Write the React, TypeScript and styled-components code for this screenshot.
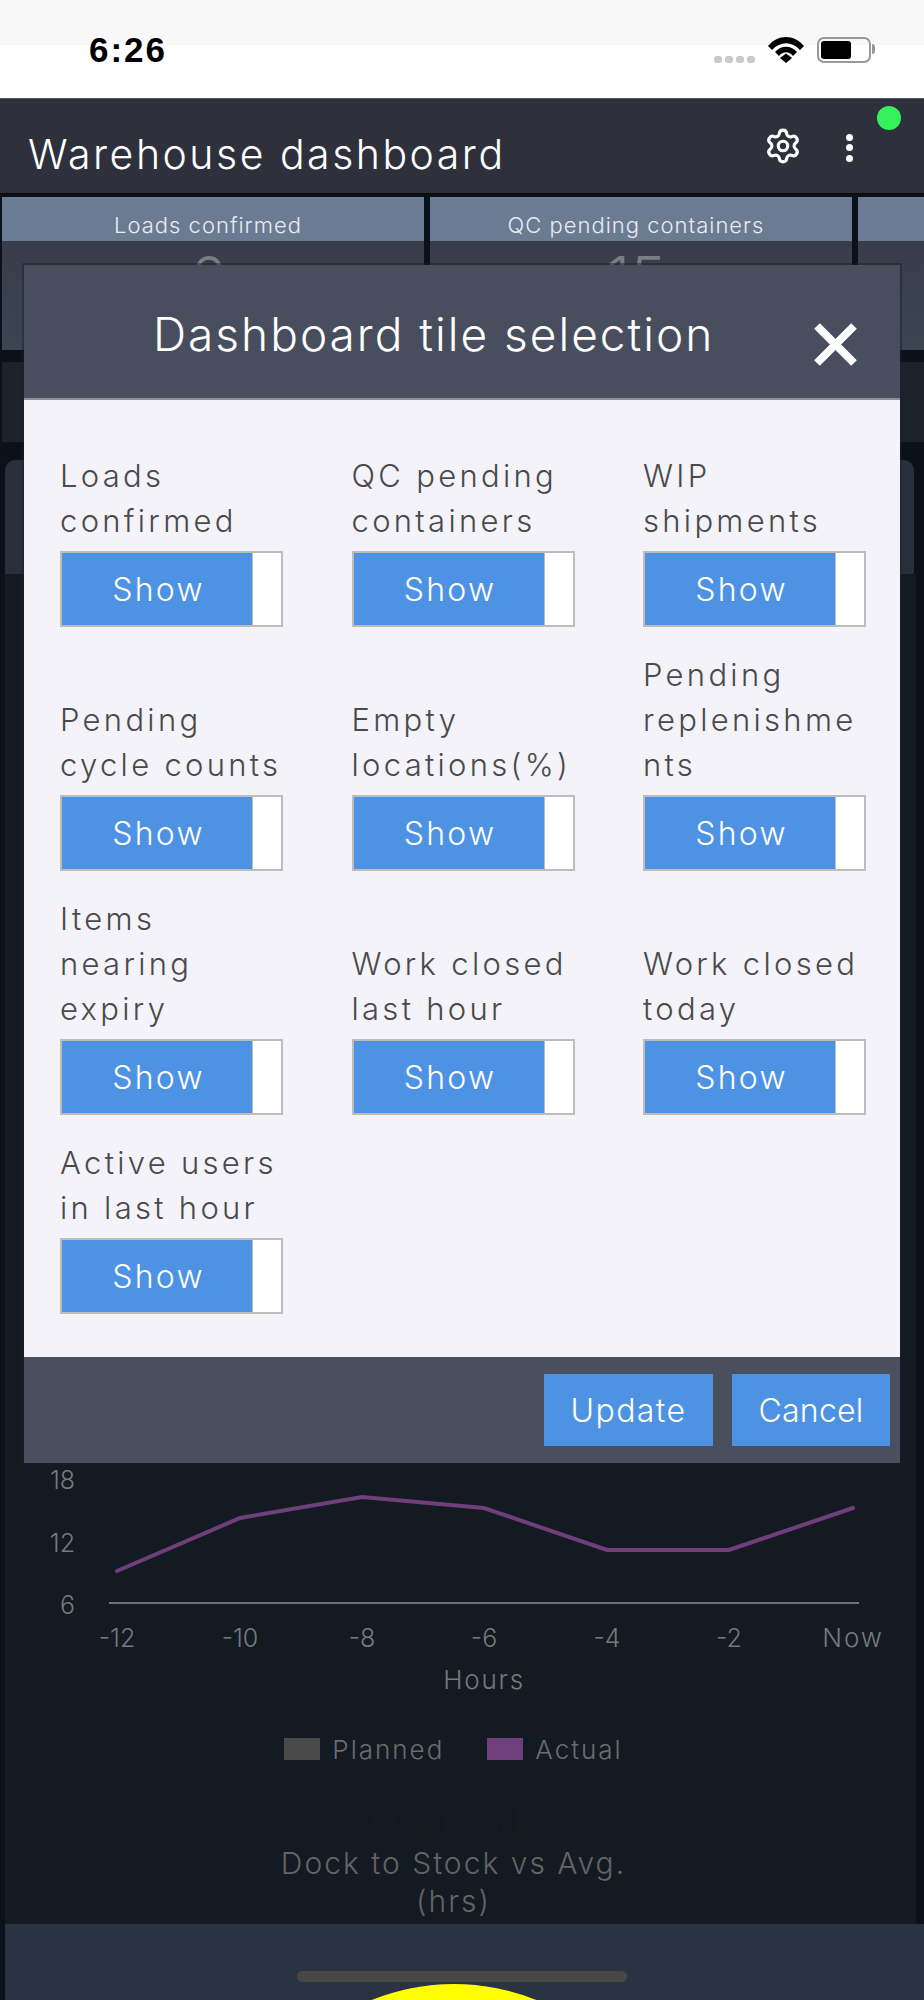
import styled, { createGlobalStyle } from "styled-components";
import { Settings } from "lucide-react";

const GlobalStyle = createGlobalStyle`
  html, body {
    margin: 0;
    padding: 0;
    background: #0b1119;
  }
  body {
    font-family: Inter, "Liberation Sans", sans-serif;
    font-weight: 300;
  }
`;

const Page = styled.div`
  position: relative;
  width: 924px;
  height: 2000px;
  overflow: hidden;
  display: flex;
  flex-direction: column;
  background: #0b1119;
`;

/* phone status bar */
const StatusBar = styled.div`
  height: 98px;
  flex: none;
  box-sizing: border-box;
  padding: 30px 53px 0 89px;
  display: flex;
  justify-content: space-between;
  align-items: flex-start;
  background: linear-gradient(#f8f8f8 45px, #ffffff 45px);
`;

const Time = styled.span`
  font-family: "Liberation Sans", Arial, sans-serif;
  font-weight: 700;
  font-size: 35px;
  line-height: 40px;
  letter-spacing: 2px;
  color: #000;
`;

const StatusIcons = styled.div`
  display: flex;
  align-items: flex-end;
  height: 26px;
  margin-top: 7px;
`;

const SignalDots = styled.div`
  display: flex;
  gap: 3px;
  margin-right: 13px;
`;

const SignalDot = styled.i`
  width: 8px;
  height: 7px;
  border-radius: 3px;
  background: #c9c9c9;
`;

const Battery = styled.div`
  position: relative;
  box-sizing: border-box;
  width: 54px;
  height: 26px;
  margin-left: 13px;
  padding: 2px;
  border: 2px solid #999;
  border-radius: 7px;
  &::after {
    content: "";
    position: absolute;
    right: -6px;
    top: 5px;
    width: 3px;
    height: 10px;
    border-radius: 0 3px 3px 0;
    background: #999;
  }
`;

const BatteryFill = styled.div`
  width: 30px;
  height: 100%;
  border-radius: 3px;
  background: #000;
`;

/* app header */
const Header = styled.header`
  position: relative;
  height: 97px;
  flex: none;
  box-sizing: border-box;
  padding: 0 0 0 28px;
  display: flex;
  align-items: center;
  background: #2e303b;
  border-top: 1px solid #555863;
  border-bottom: 2px solid #0b0d12;
`;

const Title = styled.h1`
  margin: 15px 0 0;
  flex: 1;
  font-size: 41px;
  font-weight: 300;
  letter-spacing: 2.5px;
  color: #fff;
`;

const HeaderActions = styled.div`
  display: flex;
  align-items: center;
  gap: 44px;
  margin-right: 71px;
  color: #fff;
`;

const MoreDots = styled.div`
  display: flex;
  flex-direction: column;
  gap: 3.5px;
  margin-top: 3px;
  i {
    width: 7px;
    height: 7px;
    border-radius: 50%;
    background: #fff;
  }
`;

const OnlineDot = styled.span`
  position: absolute;
  top: 7px;
  right: 23px;
  width: 24px;
  height: 24px;
  border-radius: 50%;
  background: #35f25c;
`;

/* tiles behind the dialog */
const TileRow = styled.div`
  flex: none;
  display: flex;
  gap: 6px;
  box-sizing: border-box;
  height: 155px;
  padding: 2px 0 0 2px;
  overflow: hidden;
`;

const Tile = styled.div`
  flex: none;
  width: 422px;
  background: linear-gradient(#343a46, #3e4552);
  overflow: hidden;
`;

const TileHead = styled.div`
  box-sizing: border-box;
  height: 44px;
  padding: 12px 10px 0 0;
  display: flex;
  align-items: center;
  justify-content: center;
  font-size: 22px;
  letter-spacing: 1px;
  color: #e8ecf2;
  background: #6b7b92;
`;

const TileValue = styled.div`
  margin-top: 2px;
  padding-right: 10px;
  text-align: center;
  font-size: 60px;
  line-height: 70px;
  color: #7b7d82;
`;

const Strip = styled.div`
  flex: none;
  height: 80px;
  margin: 12px 0 0 2px;
  background: #1d232b;
`;

const SummaryCard = styled.div`
  flex: none;
  height: 114px;
  margin: 18px 10px 0 5px;
  border-radius: 10px 10px 0 0;
  background: #29303b;
`;

/* chart panel */
const ChartPanel = styled.section`
  flex: 1;
  min-height: 0;
  margin: 0 8px 0 5px;
  padding: 0 3px 4px 0;
  display: flex;
  flex-direction: column;
  justify-content: flex-end;
  background: #131a22;
`;

const ChartSvg = styled.svg`
  display: block;
  flex: none;
  text {
    font-family: Inter, "Liberation Sans", sans-serif;
    font-weight: 300;
    font-size: 25px;
    fill: #77797c;
  }
  text.word {
    font-size: 26px;
    letter-spacing: 1.8px;
  }
`;

const Legend = styled.div`
  display: flex;
  justify-content: center;
  align-items: center;
  height: 22px;
  margin: 38px 11px 1px 0;
  font-size: 26px;
  letter-spacing: 2px;
  color: #6b6d70;
`;

const LegendItem = styled.div`
  display: flex;
  align-items: center;
  gap: 12px;
  & + & {
    margin-left: 43px;
  }
`;

const Swatch = styled.span<{ $color: string }>`
  width: 36px;
  height: 22px;
  background: ${(p) => p.$color};
`;

const ChartTitle = styled.div`
  margin: 39px 11px 0 0;
  text-align: center;
  font-size: 36px;
  line-height: 44px;
  letter-spacing: 1.2px;
  color: #16181b;
`;

const Caption = styled.div`
  margin-right: 11px;
  text-align: center;
  font-size: 30px;
  line-height: 38px;
  letter-spacing: 2px;
  color: #636466;
`;

const BottomBar = styled.div`
  position: relative;
  flex: none;
  height: 76px;
  margin-left: 5px;
  background: #293342;
`;

const HomeIndicator = styled.div`
  position: absolute;
  left: 292px;
  top: 47px;
  width: 330px;
  height: 11px;
  border-radius: 6px;
  background: #484848;
`;

const YellowDisc = styled.div`
  position: absolute;
  left: 229px;
  top: 60px;
  width: 440px;
  height: 440px;
  border-radius: 50%;
  background: #ffff00;
`;

/* dialog */
const Modal = styled.div`
  position: absolute;
  left: 24px;
  top: 265px;
  width: 876px;
  display: flex;
  flex-direction: column;
  box-shadow: 0 0 0 2px rgba(25, 30, 38, 0.45);
`;

const ModalHead = styled.div`
  height: 135px;
  box-sizing: border-box;
  display: flex;
  align-items: center;
  padding-left: 129px;
  background: #484e5d;
  border-bottom: 2px solid #8b8f9a;
`;

const ModalTitle = styled.h2`
  flex: 1;
  margin: 4px 0 0;
  font-size: 46px;
  font-weight: 300;
  letter-spacing: 2px;
  color: #fff;
`;

const CloseIcon = styled.svg`
  flex: none;
  margin: 25px 42px 0 0;
`;

const ModalBody = styled.div`
  box-sizing: border-box;
  height: 957px;
  padding: 55px 34px 0 36px;
  display: grid;
  grid-template-columns: repeat(3, 223px);
  justify-content: space-between;
  align-content: start;
  align-items: end;
  row-gap: 27px;
  background: #f3f3f9;
`;

const TileOption = styled.div`
  display: flex;
  flex-direction: column;
  gap: 8px;
`;

const OptionLabel = styled.div`
  margin-top: -2px;
  font-size: 31px;
  line-height: 45px;
  letter-spacing: 3.3px;
  white-space: pre;
  color: #4a4a4a;
`;

const Toggle = styled.div`
  box-sizing: border-box;
  width: 223px;
  height: 76px;
  display: flex;
  background: #fff;
  border: 2px solid #bdbdbd;
`;

const ToggleLabel = styled.div`
  box-sizing: border-box;
  width: 191px;
  padding-left: 3px;
  display: flex;
  align-items: center;
  justify-content: center;
  font-size: 32px;
  letter-spacing: 2.2px;
  color: #fff;
  background: #4e92e4;
  border-right: 1px solid #bdbdbd;
`;

const ModalFoot = styled.div`
  height: 106px;
  box-sizing: border-box;
  padding: 17px 10px 0 0;
  display: flex;
  justify-content: flex-end;
  gap: 19px;
  background: #4a4f5e;
`;

const FootButton = styled.button<{ $width: number; $spacing: number }>`
  width: ${(p) => p.$width}px;
  height: 72px;
  padding: 0;
  border: 0;
  font-family: inherit;
  font-weight: 300;
  font-size: 32px;
  letter-spacing: ${(p) => p.$spacing}px;
  color: #fff;
  background: #4e92e4;
`;

const options = [
  "Loads\nconfirmed",
  "QC pending\ncontainers",
  "WIP\nshipments",
  "Pending\ncycle counts",
  "Empty\nlocations(%)",
  "Pending\nreplenishme\nnts",
  "Items\nnearing\nexpiry",
  "Work closed\nlast hour",
  "Work closed\ntoday",
  "Active users\nin last hour",
];

const chartPoints = [
  { label: "-12", x: 112, y: 111 },
  { label: "-10", x: 235, y: 58 },
  { label: "-8", x: 357, y: 37 },
  { label: "-6", x: 479, y: 48 },
  { label: "-4", x: 602, y: 90 },
  { label: "-2", x: 724, y: 90 },
  { label: "Now", x: 848, y: 48 },
];

function App() {
  return (
    <>
      <GlobalStyle />
      <Page>
        <StatusBar>
          <Time>6:26</Time>
          <StatusIcons>
            <SignalDots>
              <SignalDot />
              <SignalDot />
              <SignalDot />
              <SignalDot />
            </SignalDots>
            <svg width="36" height="26" viewBox="0 0 36 26">
              <path d="M0 9 C10 -3 26 -3 36 9 L32 13 C24 4 12 4 4 13 Z" fill="#000" />
              <path d="M7 16 C13 9 23 9 29 16 L25 20 C21 15 15 15 11 20 Z" transform="translate(0 -1)" fill="#000" />
              <path d="M12 21 L18 16.5 L24 21 L18 26 Z" fill="#000" />
            </svg>
            <Battery>
              <BatteryFill />
            </Battery>
          </StatusIcons>
        </StatusBar>

        <Header>
          <Title>Warehouse dashboard</Title>
          <HeaderActions>
            <Settings size={38} strokeWidth={2} />
            <MoreDots>
              <i />
              <i />
              <i />
            </MoreDots>
          </HeaderActions>
          <OnlineDot />
        </Header>

        <TileRow>
          <Tile>
            <TileHead>Loads confirmed</TileHead>
            <TileValue>6</TileValue>
          </Tile>
          <Tile>
            <TileHead>QC pending containers</TileHead>
            <TileValue>15</TileValue>
          </Tile>
          <Tile>
            <TileHead />
          </Tile>
        </TileRow>
        <Strip />
        <SummaryCard />

        <ChartPanel>
          <ChartSvg width="906" height="240" viewBox="0 0 906 240">
            <text x="70" y="29" textAnchor="end">18</text>
            <text x="70" y="92" textAnchor="end">12</text>
            <text x="70" y="154" textAnchor="end">6</text>
            <line x1="104" y1="143" x2="854" y2="143" stroke="#6f7176" strokeWidth="2" />
            <polyline
              points={chartPoints.map((p) => `${p.x},${p.y}`).join(" ")}
              fill="none"
              stroke="#6f3f7c"
              strokeWidth="4"
              strokeLinecap="round"
            />
            {chartPoints.map((p) => (
              <text
                key={p.label}
                className={p.label === "Now" ? "word" : undefined}
                x={p.x}
                y="187"
                textAnchor="middle"
              >
                {p.label}
              </text>
            ))}
            <text className="word" x="479" y="229" textAnchor="middle">Hours</text>
          </ChartSvg>
          <Legend>
            <LegendItem>
              <Swatch $color="#4a4a4a" />
              Planned
            </LegendItem>
            <LegendItem>
              <Swatch $color="#6f3f7c" />
              Actual
            </LegendItem>
          </Legend>
          <ChartTitle>Chart title</ChartTitle>
          <Caption>
            Dock to Stock vs Avg.
            <br />
            (hrs)
          </Caption>
        </ChartPanel>

        <BottomBar>
          <YellowDisc />
          <HomeIndicator />
        </BottomBar>

        <Modal>
          <ModalHead>
            <ModalTitle>Dashboard tile selection</ModalTitle>
            <CloseIcon width="45" height="43" viewBox="0 0 45 43">
              <path d="M4 3 L41 40 M41 3 L4 40" stroke="#fff" strokeWidth="8" fill="none" />
            </CloseIcon>
          </ModalHead>
          <ModalBody>
            {options.map((label) => (
              <TileOption key={label}>
                <OptionLabel>{label}</OptionLabel>
                <Toggle>
                  <ToggleLabel>Show</ToggleLabel>
                </Toggle>
              </TileOption>
            ))}
          </ModalBody>
          <ModalFoot>
            <FootButton $width={169} $spacing={1.4}>Update</FootButton>
            <FootButton $width={158} $spacing={0.2}>Cancel</FootButton>
          </ModalFoot>
        </Modal>
      </Page>
    </>
  );
}

export default App;
